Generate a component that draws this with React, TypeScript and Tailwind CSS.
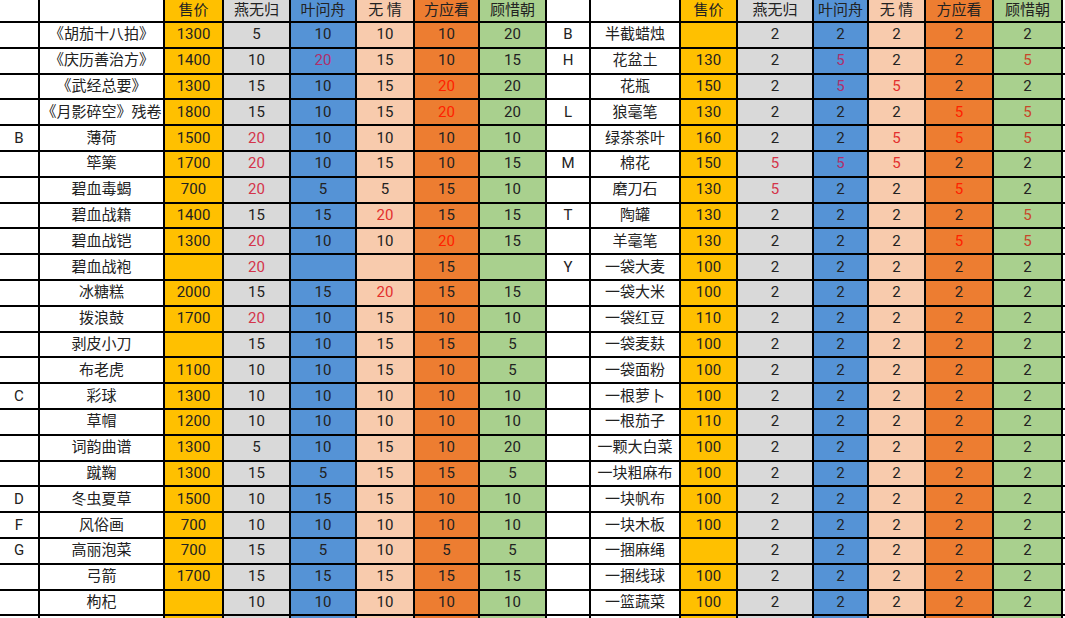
import { Fragment } from 'react';

// 表格列的底色（左右两半相同）
const COL_BG = [
  'bg-white',
  'bg-white',
  'bg-[#ffc000]',
  'bg-[#d9d9d9]',
  'bg-[#5593d6]',
  'bg-[#f8cbad]',
  'bg-[#ed7d31]',
  'bg-[#a9d08e]',
];

// 红字在不同底色上的观感不同
const RED = [
  '',
  '',
  'text-[#e8302a]',
  'text-[#d4344a]',
  'text-[#b02f6c]',
  'text-[#e3302e]',
  'text-[#ff2200]',
  'text-[#c8472a]',
];

const HEADER = ['', '', '售价', '燕无归', '叶问舟', '无 情', '方应看', '顾惜朝'];

// 数值后面带 r 的是红字
const LEFT: string[][] = [
  ['', '《胡茄十八拍》', '1300', '5', '10', '10', '10', '20'],
  ['', '《庆历善治方》', '1400', '10', '20r', '15', '10', '15'],
  ['', '《武经总要》', '1300', '15', '10', '15', '20r', '20'],
  ['', '《月影碎空》残卷', '1800', '15', '10', '15', '20r', '20'],
  ['B', '薄荷', '1500', '20r', '10', '10', '10', '10'],
  ['', '筚篥', '1700', '20r', '10', '15', '10', '15'],
  ['', '碧血毒蝎', '700', '20r', '5', '5', '15', '10'],
  ['', '碧血战籍', '1400', '15', '15', '20r', '15', '15'],
  ['', '碧血战铠', '1300', '20r', '10', '10', '20r', '15'],
  ['', '碧血战袍', '', '20r', '', '', '15', ''],
  ['', '冰糖糕', '2000', '15', '15', '20r', '15', '15'],
  ['', '拨浪鼓', '1700', '20r', '10', '15', '10', '10'],
  ['', '剥皮小刀', '', '15', '10', '15', '15', '5'],
  ['', '布老虎', '1100', '10', '10', '15', '10', '5'],
  ['C', '彩球', '1300', '10', '10', '10', '10', '10'],
  ['', '草帽', '1200', '10', '10', '10', '10', '10'],
  ['', '词韵曲谱', '1300', '5', '10', '15', '10', '20'],
  ['', '蹴鞠', '1300', '15', '5', '15', '15', '5'],
  ['D', '冬虫夏草', '1500', '10', '15', '15', '10', '10'],
  ['F', '风俗画', '700', '10', '10', '10', '10', '10'],
  ['G', '高丽泡菜', '700', '15', '5', '10', '5', '5'],
  ['', '弓箭', '1700', '15', '15', '15', '15', '15'],
  ['', '枸杞', '', '10', '10', '10', '10', '10'],
  ['', '', '', '', '', '', '', ''],
];

const RIGHT: string[][] = [
  ['B', '半截蜡烛', '', '2', '2', '2', '2', '2'],
  ['H', '花盆土', '130', '2', '5r', '2', '2', '5r'],
  ['', '花瓶', '150', '2', '5r', '5r', '2', '2'],
  ['L', '狼毫笔', '130', '2', '2', '2', '5r', '5r'],
  ['', '绿茶茶叶', '160', '2', '2', '5r', '5r', '5r'],
  ['M', '棉花', '150', '5r', '5r', '5r', '2', '2'],
  ['', '磨刀石', '130', '5r', '2', '2', '5r', '2'],
  ['T', '陶罐', '130', '2', '2', '2', '2', '5r'],
  ['', '羊毫笔', '130', '2', '2', '2', '5r', '5r'],
  ['Y', '一袋大麦', '100', '2', '2', '2', '2', '2'],
  ['', '一袋大米', '100', '2', '2', '2', '2', '2'],
  ['', '一袋红豆', '110', '2', '2', '2', '2', '2'],
  ['', '一袋麦麸', '100', '2', '2', '2', '2', '2'],
  ['', '一袋面粉', '100', '2', '2', '2', '2', '2'],
  ['', '一根萝卜', '100', '2', '2', '2', '2', '2'],
  ['', '一根茄子', '110', '2', '2', '2', '2', '2'],
  ['', '一颗大白菜', '100', '2', '2', '2', '2', '2'],
  ['', '一块粗麻布', '100', '2', '2', '2', '2', '2'],
  ['', '一块帆布', '100', '2', '2', '2', '2', '2'],
  ['', '一块木板', '100', '2', '2', '2', '2', '2'],
  ['', '一捆麻绳', '', '2', '2', '2', '2', '2'],
  ['', '一捆线球', '100', '2', '2', '2', '2', '2'],
  ['', '一篮蔬菜', '100', '2', '2', '2', '2', '2'],
  ['', '', '', '', '', '', '', ''],
];

function Cell({ value, col }: { value: string; col: number }) {
  const red = value.endsWith('r');
  const text = red ? value.slice(0, -1) : value;
  return (
    <div
      className={`${COL_BG[col]} ${red ? RED[col] : 'text-[#222]'} flex items-center justify-center whitespace-nowrap leading-none`}
    >
      {text}
    </div>
  );
}

export default function App() {
  const rows = [HEADER.concat(HEADER), ...LEFT.map((l, i) => l.concat(RIGHT[i]))];

  return (
    <div className="w-[1065px] h-[618px] overflow-hidden bg-white">
      <div className="grid grid-cols-[38px_123px_57px_65px_64px_56px_63px_65px_42px_88px_55px_74px_53px_55px_66px_67px_2px] grid-rows-[21px_repeat(24,23.8px)] gap-[2px] bg-black text-[15px] font-['Roboto','Noto_Sans_CJK_SC',sans-serif]">
        {rows.map((row, r) => (
          <Fragment key={r}>
            {row.map((v, c) => (
              <Cell key={c} value={v} col={c % 8} />
            ))}
            <div className="bg-white" />
          </Fragment>
        ))}
      </div>
    </div>
  );
}
